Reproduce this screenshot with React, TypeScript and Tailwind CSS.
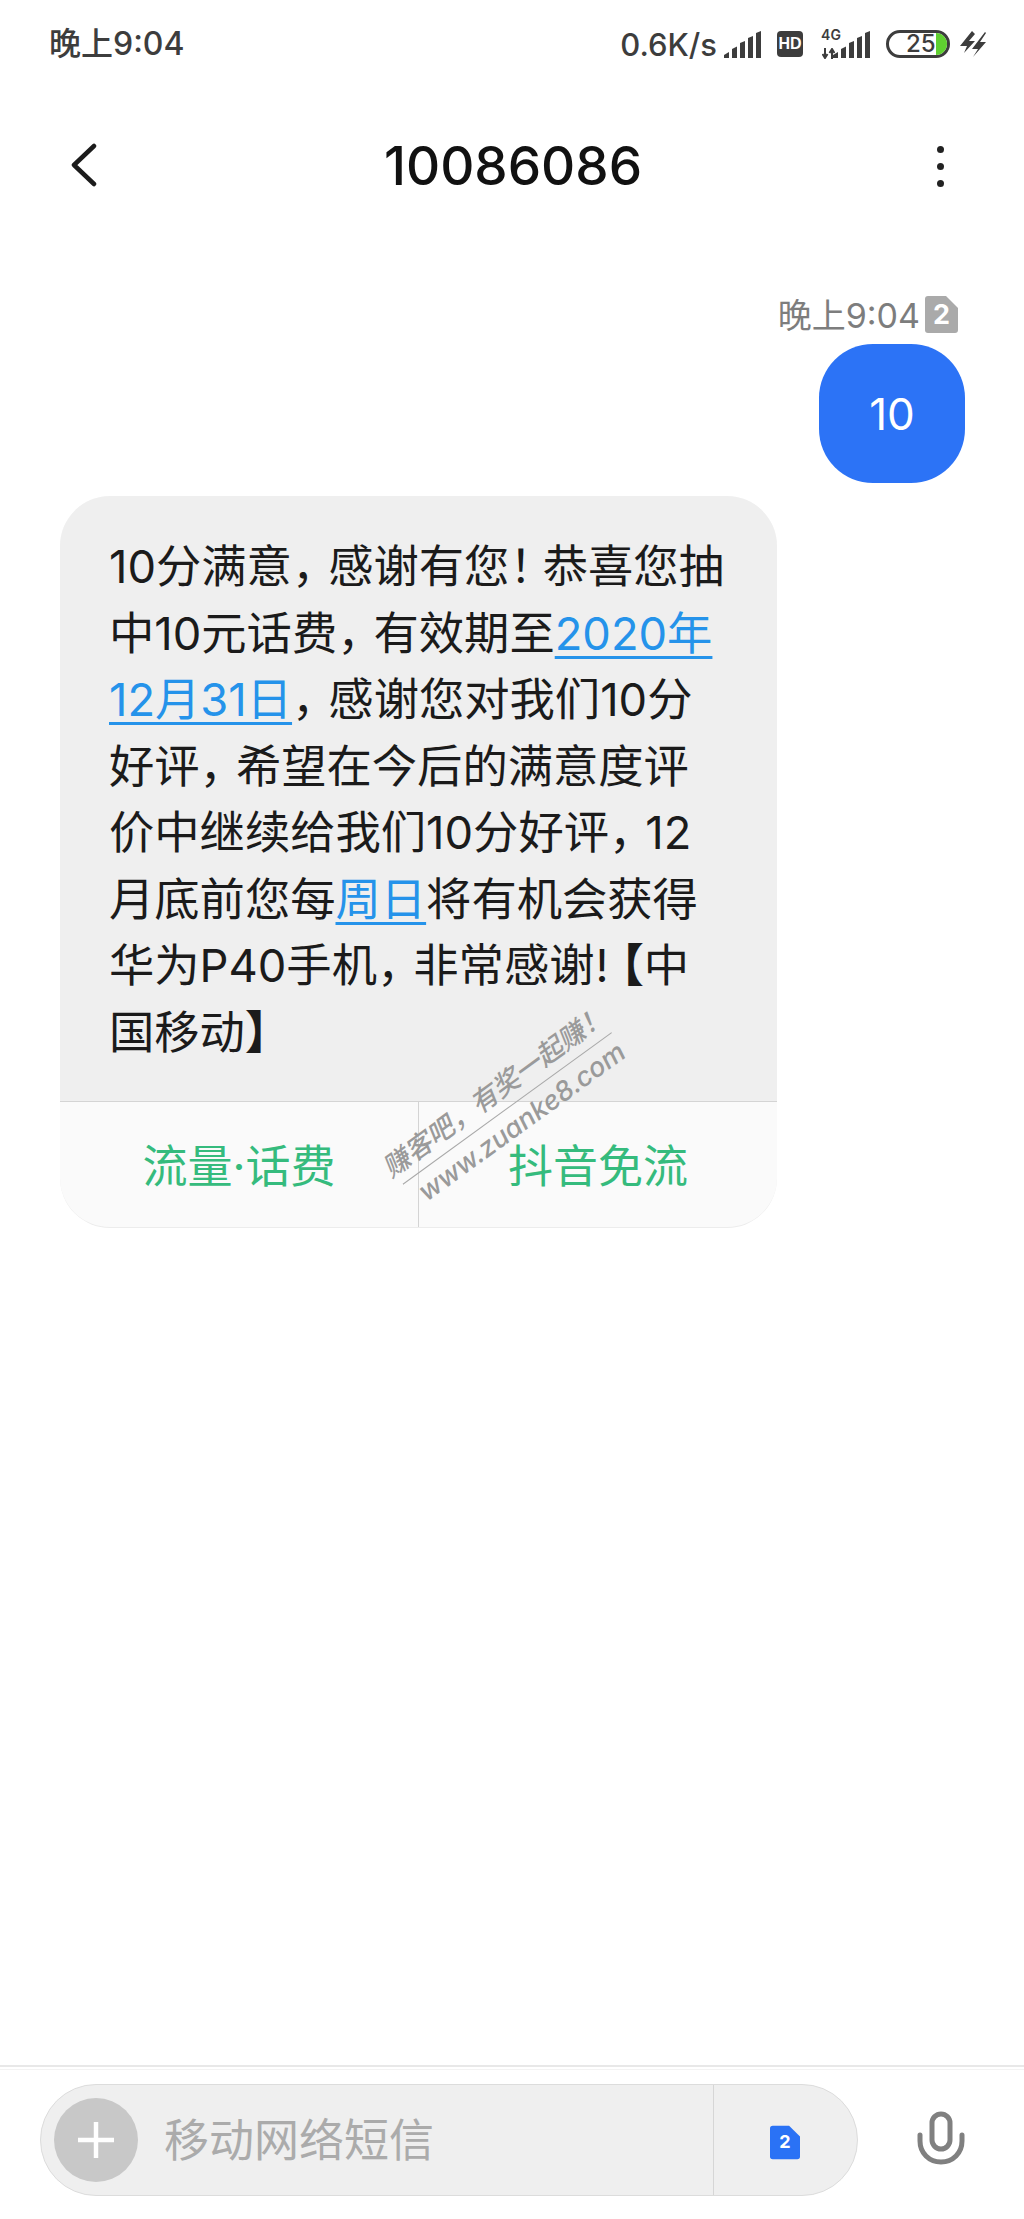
// SMS conversation screen
const FONT = { fontFamily: 'Inter, "Noto Sans CJK SC", sans-serif' };

// Status bar signal bars
const Signal = ({ className }: { className: string }) => (
    <svg className={className} viewBox="0 0 37 27" fill="#3d3d3d">
        <path d="M0 27v-3l5-3v6z" />
        <path d="M8 27v-9l5-2.5V27z" />
        <path d="M16 27V12l5-2V27z" />
        <path d="M24 27V7l5-2v22z" />
        <path d="M32 27V2l5-2v27z" />
    </svg>
);

const StatusBar = () => (
    <div className="h-[88px] shrink-0 flex items-center pl-[49px] pr-[37px] text-[#3d3d3d]">
        <span className="text-[32px] leading-none font-medium">晚上9:04</span>
        <div className="ml-auto flex items-center">
            <span className="text-[31px] leading-none font-medium mr-[7px]">0.6K/s</span>
            <Signal className="w-[37px] h-[27px] mr-[16px]" />
            <span className="w-[26px] h-[26px] rounded-[4px] bg-[#3d3d3d] text-white text-[16px] leading-[26px] font-bold font-['Liberation_Sans'] text-center mr-[17px]">HD</span>
            {/* 4G with data arrows, signal bars beside them */}
            <div className="w-[16px] h-[30px] flex flex-col items-center justify-between mr-[-3px]">
                <span className="text-[14px] leading-[12px] font-semibold ml-[6px]">4G</span>
                <svg className="w-[13px] h-[11px]" viewBox="0 0 13 11" fill="none" stroke="#3d3d3d" strokeWidth="2">
                    <path d="M3 0v9M0.5 6L3 10l2.5-4M10 11V2M7.5 5L10 1l2.5 4" />
                </svg>
            </div>
            <Signal className="w-[37px] h-[27px] mr-[16px]" />
            {/* Battery */}
            <div className="relative w-[64px] h-[28px] rounded-full border-[3px] border-[#3d3d3d] flex items-center mr-[10px]">
                <span className="text-[24px] leading-none font-medium ml-[17px]">25</span>
                <span className="w-[15px] h-[22px] bg-[#5fd030] rounded-r-full"></span>
            </div>
            {/* Double charging bolt */}
            <svg className="w-[27px] h-[26px]" viewBox="0 0 27 26" fill="#3d3d3d">
                <path d="M12 0L0 15h7l-3 7 11-12H9l6-7z" />
                <path d="M25 1L12 18h6l-5 8 13-15h-6l6-9z" />
            </svg>
        </div>
    </div>
);

const Header = () => (
    <div className="h-[158px] shrink-0 flex items-center justify-between pl-[71px] pr-[80px]">
        <svg className="w-[26px] h-[44px] mt-[-4px]" viewBox="0 0 26 44" fill="none" stroke="#1c1c1c" strokeWidth="4.5" strokeLinecap="round" strokeLinejoin="round">
            <path d="M23 3L3 22l20 19" />
        </svg>
        <span className="text-[53px] leading-none font-medium text-[#111] mt-[-2px] ml-[-8px]">10086086</span>
        <div className="flex flex-col gap-[10px] mt-[-2px]">
            <span className="w-[7px] h-[7px] rounded-full bg-[#222]"></span>
            <span className="w-[7px] h-[7px] rounded-full bg-[#222]"></span>
            <span className="w-[7px] h-[7px] rounded-full bg-[#222]"></span>
        </div>
    </div>
);

// SIM card shape with a slot number
const SimBadge = ({ className, fill, textClass }: { className: string; fill: string; textClass: string }) => (
    <span className={`relative inline-flex items-center justify-center ${className}`}>
        <svg className="absolute inset-0 w-full h-full" viewBox="0 0 33 37" fill={fill}>
            <path d="M3 0h18l12 12v22a3 3 0 0 1-3 3H3a3 3 0 0 1-3-3V3a3 3 0 0 1 3-3z" />
        </svg>
        <span className={`relative font-bold text-white ${textClass}`}>2</span>
    </span>
);

const LINK = 'text-[#2593ea] underline decoration-[3px] underline-offset-[6px]';

// Punctuation in the reference sits in a narrower cell than the CJK font's
const Comma = () => <span className="mr-[-9px]">，</span>;

const Incoming = () => (
    <div className="relative w-[717px] ml-[60px] mt-[13px] rounded-[50px] overflow-hidden bg-[#fafafa] border-b border-[#ececec]">
        <div className="bg-[#efefef] pt-[38px] pb-[35px] pl-[49px] text-[45.3px] leading-[66.5px] text-[#1b1b1b] whitespace-nowrap">
            <div>10分满意<Comma />感谢有您<span className="mr-[-12px]">！</span>恭喜您抽</div>
            <div>中10元话费<Comma />有效期至<span className={LINK}>2020年</span></div>
            <div><span className={LINK}>12月31日</span><Comma />感谢您对我们10分</div>
            <div>好评<Comma />希望在今后的满意度评</div>
            <div>价中继续给我们10分好评<Comma />12</div>
            <div>月底前您每<span className={LINK}>周日</span>将有机会获得</div>
            <div>华为P40手机<Comma />非常感谢<span className="ml-[1px]">!</span><span className="font-black ml-[-10px]">【</span>中</div>
            <div>国移动<span className="font-black">】</span></div>
        </div>
        <div className="h-[126px] border-t border-[#d4d4d4] flex text-[45px] leading-none text-[#35bb7d]">
            <div className="w-[359px] flex items-center justify-center pt-[3px] border-r border-[#d4d4d4]">流量·话费</div>
            <div className="flex-1 flex items-center justify-center pt-[3px]">抖音免流</div>
        </div>
        {/* Forum watermark over the bubble */}
        <div className="absolute left-[297px] top-[577px] w-[300px] h-[70px] -rotate-[36deg] flex flex-col items-center justify-between text-[#9a9a9a] italic font-medium">
            <span className="text-[27px] leading-[30px] whitespace-nowrap">赚客吧，有奖一起赚！</span>
            <span className="w-[258px] h-px bg-[#a8a8a8]"></span>
            <span className="text-[27px] leading-[30px] whitespace-nowrap ml-[8px]">www.zuanke8.com</span>
        </div>
    </div>
);

const Messages = () => (
    <div className="flex-1 flex flex-col">
        {/* Outgoing */}
        <div className="flex items-center justify-end pr-[66px] mt-[50px] h-[37px]">
            <span className="text-[34px] leading-none text-[#7d7d7d] mt-[3px] mr-[5px]">晚上9:04</span>
            <SimBadge className="w-[33px] h-[37px]" fill="#aaaaaa" textClass="text-[27px] leading-none" />
        </div>
        <div className="flex justify-end pr-[59px] mt-[11px]">
            <div className="w-[146px] h-[139px] rounded-[54px] bg-[#2c73f6] text-white text-[44px] leading-none flex items-center justify-center">10</div>
        </div>
        <Incoming />
    </div>
);

const Composer = () => (
    <div className="h-[154px] shrink-0 border-t-2 border-[#e8e8e8] flex flex-col">
        <div className="h-[3px] border-b border-[#f3f3f3]"></div>
        <div className="flex items-start pl-[40px] pt-[14px]">
            <div className="w-[818px] h-[112px] rounded-full bg-[#efefef] border border-[#dcdcdc] flex items-center overflow-hidden">
                <div className="w-[84px] h-[84px] ml-[13px] rounded-full bg-[#c8c8c8] flex items-center justify-center shrink-0">
                    <svg className="w-[38px] h-[38px]" viewBox="0 0 38 38" stroke="#ffffff" strokeWidth="4.5">
                        <path d="M19 1v36M1 19h36" />
                    </svg>
                </div>
                <span className="ml-[26px] text-[45px] leading-none text-[#ababab]">移动网络短信</span>
                <div className="ml-auto w-[144px] h-full border-l border-[#d6d6d6] flex items-center justify-center pt-[4px] pr-[1px]">
                    <SimBadge className="w-[30px] h-[35px]" fill="#2a72f5" textClass="text-[18px] leading-none" />
                </div>
            </div>
            {/* Mic */}
            <svg className="w-[48px] h-[54px] ml-[59px] mt-[27px]" viewBox="0 0 48 54" fill="none" stroke="#808080" strokeLinecap="round">
                <rect x="15" y="3" width="18" height="35" rx="9" strokeWidth="5" />
                <path d="M3 24v6c0 12 9 21 21 21s21-9 21-21v-6" strokeWidth="5" />
            </svg>
        </div>
    </div>
);

export default function App() {
    return (
        <div className="w-[1024px] h-[2219px] bg-white flex flex-col overflow-hidden" style={FONT}>
            <StatusBar />
            <Header />
            <Messages />
            <Composer />
        </div>
    );
}
